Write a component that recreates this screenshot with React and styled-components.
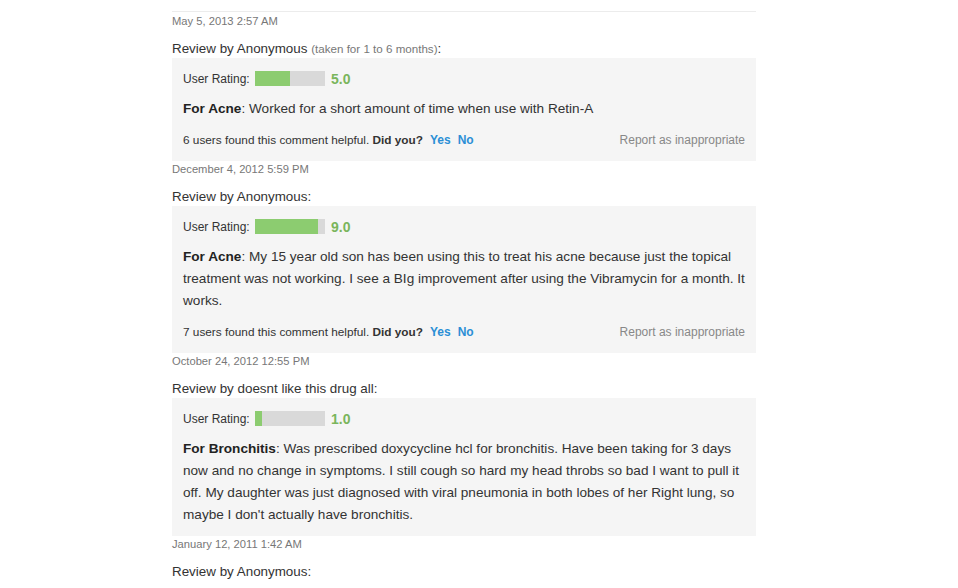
import React from 'react';
import styled, {createGlobalStyle} from 'styled-components';

const GlobalStyle = createGlobalStyle`
  body {
    margin: 0;
    background: #fff;
    font-family: "Liberation Sans", Arial, sans-serif;
    color: #333;
  }
`;

const Page = styled.div`
  width: 584px;
  margin-left: 172px;
  padding-top: 11px;
`;

const TopRule = styled.div`
  height: 1px;
  background: #ececec;
`;

const DateLine = styled.div`
  font-size: 11.2px;
  line-height: 14px;
  color: #777;
  margin-top: ${p => (p.first ? '2px' : '1px')};
`;

const ReviewTitle = styled.div`
  font-size: 13.4px;
  line-height: 16px;
  color: #333;
  margin-top: 13px;
  margin-bottom: 1px;
`;

const Taken = styled.span`
  font-size: 11.6px;
  color: #777;
`;

const Box = styled.div`
  background: #f5f5f5;
  padding: 13px 11px 10px;
`;

const RatingRow = styled.div`
  display: flex;
  align-items: center;
  height: 15px;
`;

const RatingLabel = styled.span`
  font-size: 12px;
  color: #333;
  width: 72px;
`;

const Bar = styled.div`
  width: 70px;
  height: 15px;
  background: #d9d9d9;
`;

const Fill = styled.div`
  height: 100%;
  background: #8ccc70;
`;

const Score = styled.span`
  margin-left: 6px;
  font-size: 14px;
  font-weight: bold;
  color: #7ab55c;
`;

const Body = styled.p`
  margin: 12px 0 0;
  font-size: 13.6px;
  line-height: 22px;
  color: #333;
`;

const Condition = styled.b`
  color: #222;
`;

const Footer = styled.div`
  display: flex;
  justify-content: space-between;
  align-items: center;
  height: 20px;
  margin-top: 10px;
  padding-bottom: 1px;
  font-size: 11.8px;
`;

const Helpful = styled.span`
  color: #333;
  b { font-weight: bold; }
`;

const Vote = styled.a`
  color: #2b8fd5;
  font-weight: bold;
  font-size: 12px;
  margin-left: 7px;
  text-decoration: none;
`;

const Report = styled.a`
  color: #888;
  font-size: 12px;
  text-decoration: none;
`;

const reviews = [
  {
    date: 'May 5, 2013 2:57 AM',
    by: 'Anonymous',
    taken: '(taken for 1 to 6 months)',
    rating: 5,
    condition: 'For Acne',
    text: 'Worked for a short amount of time when use with Retin-A',
    helpful: 6,
  },
  {
    date: 'December 4, 2012 5:59 PM',
    by: 'Anonymous',
    rating: 9,
    condition: 'For Acne',
    text: 'My 15 year old son has been using this to treat his acne because just the topical treatment was not working. I see a BIg improvement after using the Vibramycin for a month. It works.',
    helpful: 7,
  },
  {
    date: 'October 24, 2012 12:55 PM',
    by: 'doesnt like this drug all',
    rating: 1,
    condition: 'For Bronchitis',
    text: "Was prescribed doxycycline hcl for bronchitis. Have been taking for 3 days now and no change in symptoms. I still cough so hard my head throbs so bad I want to pull it off. My daughter was just diagnosed with viral pneumonia in both lobes of her Right lung, so maybe I don't actually have bronchitis.",
  },
];

function Review({r, first}) {
  return (
    <>
      <DateLine first={first}>{r.date}</DateLine>
      <ReviewTitle>
        Review by {r.by}
        {r.taken ? <> <Taken>{r.taken}</Taken></> : null}:
      </ReviewTitle>
      <Box>
        <RatingRow>
          <RatingLabel>User Rating:</RatingLabel>
          <Bar><Fill style={{width: `${r.rating * 10}%`}} /></Bar>
          <Score>{r.rating.toFixed(1)}</Score>
        </RatingRow>
        <Body><Condition>{r.condition}</Condition>: {r.text}</Body>
        {r.helpful ? (
          <Footer>
            <Helpful>
              {r.helpful} users found this comment helpful. <b>Did you?</b>
              <Vote href="#">Yes</Vote>
              <Vote href="#">No</Vote>
            </Helpful>
            <Report href="#">Report as inappropriate</Report>
          </Footer>
        ) : null}
      </Box>
    </>
  );
}

export default function App() {
  return (
    <>
      <GlobalStyle />
      <Page>
        <TopRule />
        {reviews.map((r, i) => <Review key={i} r={r} first={i === 0} />)}
        <DateLine>January 12, 2011 1:42 AM</DateLine>
        <ReviewTitle>Review by Anonymous:</ReviewTitle>
      </Page>
    </>
  );
}
